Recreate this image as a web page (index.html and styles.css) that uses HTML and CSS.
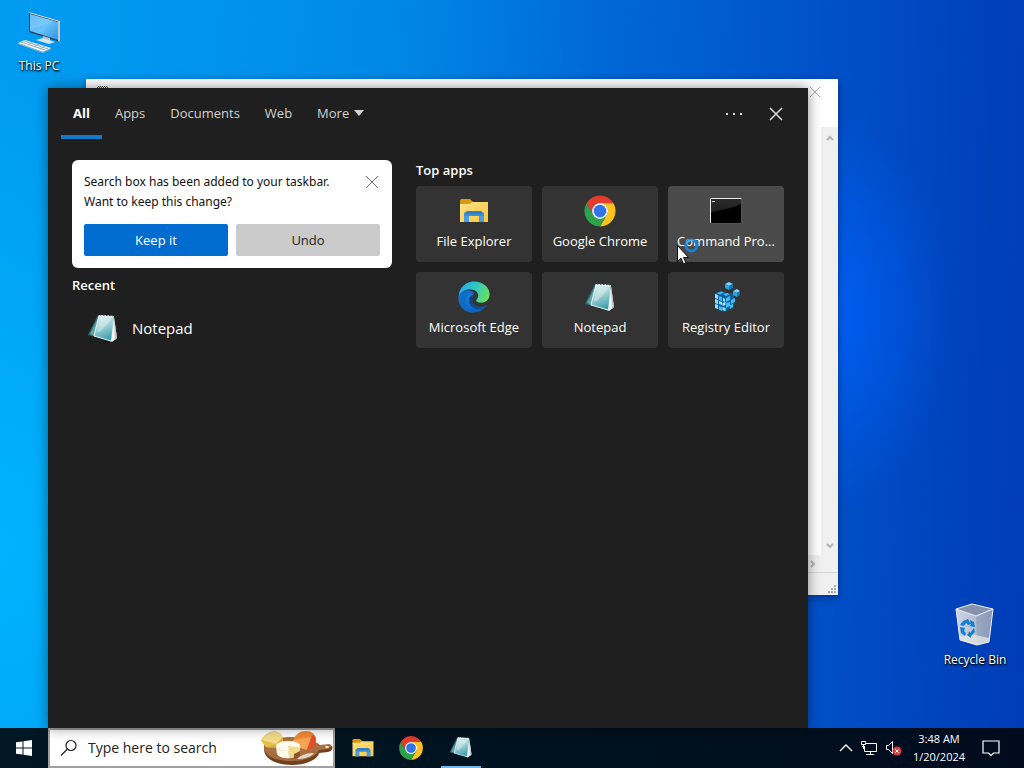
FILE: index.html
```html
<!DOCTYPE html>
<html lang="en">
<head>
<meta charset="utf-8">
<title>Desktop</title>
<link rel="stylesheet" href="styles.css">
</head>
<body>
<svg class="defs" aria-hidden="true">
  <defs>
    <linearGradient id="gFolder" x1="0" y1="0" x2="1" y2="1"><stop offset="0" stop-color="#ffe08a"/><stop offset="1" stop-color="#fbc93f"/></linearGradient>
    <linearGradient id="gPage" x1="0.2" y1="0" x2="0.5" y2="1"><stop offset="0" stop-color="#e2f3f4"/><stop offset="0.5" stop-color="#9dd0d4"/><stop offset="1" stop-color="#3a9fad"/></linearGradient>
    <linearGradient id="gEdgeTop" x1="0" y1="0.3" x2="1" y2="0.6"><stop offset="0" stop-color="#2aa9e6"/><stop offset="0.5" stop-color="#2fc9c0"/><stop offset="1" stop-color="#6be05c"/></linearGradient>
    <linearGradient id="gEdgeMid" x1="0" y1="0" x2="0.5" y2="1"><stop offset="0" stop-color="#2299e4"/><stop offset="1" stop-color="#0b64c0"/></linearGradient>
    <linearGradient id="gEdgeLow" x1="0" y1="0" x2="1" y2="0.6"><stop offset="0" stop-color="#0f3f7c"/><stop offset="1" stop-color="#0d55a0"/></linearGradient>
    <linearGradient id="gScreen" x1="0" y1="0" x2="1" y2="1"><stop offset="0" stop-color="#4fb2f3"/><stop offset="0.5" stop-color="#6ac3fb"/><stop offset="1" stop-color="#2b93e6"/></linearGradient>
    <linearGradient id="gBin" x1="0" y1="0" x2="1" y2="0"><stop offset="0" stop-color="#d8dde6"/><stop offset="0.55" stop-color="#bcc4d1"/><stop offset="1" stop-color="#929fb8"/></linearGradient>
    <linearGradient id="gTerm" x1="0" y1="0" x2="0" y2="1"><stop offset="0" stop-color="#2c2c2c"/><stop offset="1" stop-color="#151515"/></linearGradient>
  </defs>
  <symbol id="i-folder" viewBox="0 0 32 32">
    <path fill="#d99a0b" d="M2 5.500q0-1.500 1.500-1.500H12l3 3v4H2z"/>
    <path fill="url(#gFolder)" d="M2 9h10l2-2h16v20H2z"/>
    <path fill="#3c8fd4" d="M9 16h14l3 2v9h-5v-6H11v6H6v-9z"/>
    <path fill="#2b73b8" d="M9 16h14l1 3H8z" opacity=".6"/>
    <path fill="#55aae8" d="M6 21h5v6H6zM21 21h5v6h-5z" opacity=".55"/>
  </symbol>
  <symbol id="i-chrome" viewBox="0 0 48 48">
    <circle cx="24" cy="24" r="11.500" fill="#fff"/>
    <path fill="#e33b2e" d="M4.950 13A22 22 0 0 1 43.050 13H24A11 11 0 0 0 14.470 29.500z"/>
    <path fill="#fcc31e" d="M43.050 13A22 22 0 0 1 24 46L33.530 29.500A11 11 0 0 0 24 13z"/>
    <path fill="#2da14c" d="M24 46A22 22 0 0 1 4.950 13L14.470 29.500A11 11 0 0 0 33.530 29.500z"/>
    <circle cx="24" cy="24" r="9" fill="#2f74e8"/>
  </symbol>
  <symbol id="i-edge" viewBox="0 0 48 48">
    <path fill="url(#gEdgeMid)" d="M24 2C12 2 2 12 2 25c0 12 9 21 20 21 7 0 13-2 16-6-9 3-20-1-20-12 0-5 3-7 6-8C23 14 14 12 4 22z"/>
    <path fill="url(#gEdgeTop)" d="M3 20C5 9 14 2 24 2c12 0 22 8 22 18 0 8-6 12-12 12-5 0-7-2-7-3 0-1 3-3 3-7 0-5-5-9-12-9-7 0-12 3-15 7z"/>
    <path fill="url(#gEdgeLow)" d="M17 27c0 10 9 17 19 14 3-1 5-3 6-4 1-1 0-2-1-1-8 4-17 1-19-5-1-4 0-7 2-9-4 0-7 2-7 5z"/>
    <path fill="#0c67c5" d="M18 20c-5 3-7 9-5 15 2 7 8 11 14 11-10 1-19-4-23-13C1 24 5 15 14 14c6 0 10 3 10 7-2-1-4-1-6-1z" opacity=".75"/>
  </symbol>
  <symbol id="i-notepad" viewBox="0 0 32 32">
    <path fill="#f1f4f5" d="M27 5l3 21-5 4-4-2z"/>
    <path fill="#b9c3c6" d="M27 5l3 21-2 2z"/>
    <path fill="#2f7377" d="M11 3L1 23l8 2 6-18z"/>
    <path fill="#9ccfd0" d="M12 4L3 22l5 2 7-18z" opacity=".5"/>
    <path fill="url(#gPage)" d="M12 3l15 1-3 25L7 24z"/>
    <path fill="#fff" d="M14 6l11 1-12 13-3 0z" opacity=".3"/>
    <path fill="none" stroke="#e8f5f6" stroke-width="1" d="M12 3.500L7 24l17 5"/>
    <path stroke="#f3f8f8" stroke-width="2" stroke-dasharray="2 1" d="M12 4l15 1"/>
    <path stroke="#384b50" stroke-width="1" stroke-dasharray="1 2" d="M13 3l14 1"/>
  </symbol>
  <symbol id="i-cmd" viewBox="0 0 32 26">
    <path fill="url(#gTerm)" d="M0 0h32v26H0z"/>
    <path fill="#000" d="M1 15C7 11 17 13 31 6v19H1z"/>
    <path fill="none" stroke="#555" d="M.5 25.500h31V.5"/>
    <path fill="none" stroke="#eee" d="M.5 25V.5H31.500"/>
    <path stroke="#ddd" d="M2 3.500h3"/>
  </symbol>
  <symbol id="i-reg" viewBox="0 0 32 32">
    <path fill="#0c5f9a" d="M5 12l8-2 5 3 6-1v14l-9 5-10-4z"/>
    <path fill="#8fe0ff" d="M5 13l3 1v4l-3-1zM5 18l3 1v4l-3-1zM5 23l3 1v4l-3-1zM9 20l3 1v3l-3-1z"/>
    <path fill="#3dbcf5" d="M9 15l3 1v4l-3-1zM9 25l3 1v4l-3-1zM7 12l4-1.500 3 1-4 2zM16 17l4-2v4l-4 2zM21 19l4-2v4l-4 2zM16 22l4-1v4l-4 2zM20 24l3-1v3l-3 2zM13 13l4-1 3 1-4 2z"/>
    <path fill="#a6e7ff" d="M13 17l2 1v3l-2-1zM12.500 22l3-1v3l-3 1zM12.500 26l3 1v3l-3-1z"/>
    <path fill="#74d6fc" d="M15 3l4-2 4 2-4 2zM23 10l4-2 3 2-3 2z"/>
    <path fill="#2ba5e2" d="M15 3l4 2v4l-4-2zM23 10l4 2v4l-4-2z"/>
    <path fill="#0f76b4" d="M23 3l-4 2v4l4-2zM30 10l-3 2v4l3-2z"/>
  </symbol>
  <symbol id="i-close" viewBox="0 0 14 14"><path fill="none" stroke="currentColor" d="M1 1l12 12M13 1L1 13"/></symbol>
</svg>

<main class="desktop">
  <a class="shortcut shortcut-pc" href="#pc">
    <svg width="48" height="48" viewBox="0 0 48 48" aria-hidden="true">
      <path fill="#263b51" d="M14 3l31 9v21L14 23z"/>
      <path fill="#dceefb" d="M14 3l31 9v1L14 4z"/>
      <path fill="url(#gScreen)" d="M15 5l28 8v18L15 22z"/>
      <path fill="#a6dbff" opacity=".3" d="M15 5l24 7-24 9z"/>
      <path fill="#c7c8c7" d="M43 12l2 .5V33l-2-1z"/>
      <path fill="#aebfca" d="M28 27l7 2v4l-8-1z"/>
      <path fill="#d8e4eb" d="M21 31l7-2 12 4-6 2z"/>
      <path fill="#edf4f8" d="M3 34l7-3 26 8-8 4z"/>
      <path fill="#a3b5c2" d="M3 34l25 9v1L3 35zM28 43l8-4v1l-8 4z"/>
      <path stroke="#9bafbd" stroke-width="1" fill="none" d="M6 33l24 8M9 32l24 8M13 36l5-3M19 38l5-3M25 40l5-3"/>
    </svg>
    <span>This PC</span>
  </a>
  <a class="shortcut shortcut-bin" href="#bin">
    <svg width="48" height="48" viewBox="0 0 48 48" aria-hidden="true">
      <path fill="#8793aa" d="M5 7l16-5 21 5-17 7z"/>
      <path fill="url(#gBin)" d="M5 7l20 7 17-7-4 33-12 3-17-5z" opacity=".95"/>
      <path fill="#8796b3" opacity=".5" d="M25 14l17-7-4 33-12 3z"/>
      <path fill="#e5e5e1" opacity=".75" d="M9 35l11-3 18 4v4l-12 3-17-5z"/>
      <path fill="none" stroke="#eef1f6" stroke-width="1" d="M5 7l16-5 21 5-17 7zL9 38l17 5 12-3 4-33"/>
      <g fill="#147fd1"><path d="M12 19l5-2 3 5-3 1-2-2-2 3-4-1zM19 18l4 2 1 5-6-1 2-1zM9 25l5 1-1 3 2 2-1 3-4-3zM23 26l1 4-4 4v2l-4-3 3-4v2l1-1z"/></g>
    </svg>
    <span>Recycle Bin</span>
  </a>

  <section class="window" aria-label="Notepad window">
    <header class="window-title">
      <svg width="14" height="10" viewBox="0 0 14 10" aria-hidden="true"><path stroke="#333" stroke-dasharray="1 1" d="M2 .5h10M1 1.500h12"/><path fill="#8dc8ce" d="M1 5h12v5H1z"/></svg>
      <button type="button" aria-label="Close window"><svg width="12" height="12"><use href="#i-close"/></svg></button>
    </header>
    <div class="window-body">
      <div></div>
      <div class="scroll-v" aria-hidden="true">
        <svg width="8" height="6" viewBox="0 0 8 6"><path d="M1 5l3-3 3 3"/></svg>
        <svg width="8" height="6" viewBox="0 0 8 6"><path d="M1 1l3 3 3-3"/></svg>
      </div>
      <div class="scroll-h" aria-hidden="true"><svg width="6" height="8" viewBox="0 0 6 8"><path d="M1 1l3 3-3 3"/></svg></div>
    </div>
    <footer class="window-status"><svg width="10" height="10" viewBox="0 0 10 10" aria-hidden="true"><path fill="#aaa" d="M7 1h2v2H7zM4 4h2v2H4zM7 4h2v2H7zM1 7h2v2H1zM4 7h2v2H4zM7 7h2v2H7z"/></svg></footer>
  </section>

  <section class="search-panel" aria-label="Search">
    <header class="panel-head">
      <nav class="tabs" aria-label="Search categories">
        <button class="tab tab-active" type="button">All</button>
        <button class="tab" type="button">Apps</button>
        <button class="tab" type="button">Documents</button>
        <button class="tab" type="button">Web</button>
        <button class="tab" type="button">More<svg width="10" height="6" viewBox="0 0 10 6" aria-hidden="true"><path fill="currentColor" d="M0 0h10L5 6z"/></svg></button>
      </nav>
      <div class="panel-actions">
        <button type="button" aria-label="Options"><svg width="16" height="2" viewBox="0 0 16 2"><path fill="currentColor" d="M0 0h2v2H0zM7 0h2v2H7zM14 0h2v2h-2z"/></svg></button>
        <button type="button" aria-label="Close search"><svg width="14" height="14" stroke-width="1.500"><use href="#i-close"/></svg></button>
      </div>
    </header>
    <div class="panel-body">
      <div>
        <div class="notice">
          <div class="notice-top">
            <p>Search box has been added to your taskbar.<br>Want to keep this change?</p>
            <button class="notice-close" type="button" aria-label="Dismiss"><svg width="14" height="14"><use href="#i-close"/></svg></button>
          </div>
          <div class="notice-buttons">
            <button class="keep" type="button">Keep it</button>
            <button class="undo" type="button">Undo</button>
          </div>
        </div>
        <h2>Recent</h2>
        <a class="recent" href="#notepad"><svg width="32" height="32"><use href="#i-notepad"/></svg><span>Notepad</span></a>
      </div>
      <div>
        <h2>Top apps</h2>
        <div class="apps">
          <a class="app" href="#explorer"><svg width="32" height="32"><use href="#i-folder"/></svg><span>File Explorer</span></a>
          <a class="app" href="#chrome"><svg width="34" height="34"><use href="#i-chrome"/></svg><span>Google Chrome</span></a>
          <a class="app app-hover" href="#cmd"><svg width="32" height="26"><use href="#i-cmd"/></svg><span>Command Pro...</span></a>
          <a class="app" href="#edge"><svg width="34" height="34"><use href="#i-edge"/></svg><span>Microsoft Edge</span></a>
          <a class="app" href="#notepad"><svg width="32" height="32"><use href="#i-notepad"/></svg><span>Notepad</span></a>
          <a class="app" href="#registry"><svg width="32" height="32"><use href="#i-reg"/></svg><span>Registry Editor</span></a>
        </div>
      </div>
    </div>
  </section>

  <svg class="pointer" width="26" height="28" viewBox="0 0 26 28" aria-hidden="true">
    <circle cx="15.500" cy="8.500" r="5.500" fill="none" stroke="#1683d8" stroke-width="3"/>
    <path fill="none" stroke="#54b8f8" stroke-width="1.500" d="M10.500 6.500a5.500 5.500 0 0 1 7-3"/>
    <path fill="#fff" stroke="#111" stroke-width="1" d="M1.500 8.500v16l3.500-3.500 2.500 6 2.500-1-2.500-5.500h5z"/>
  </svg>
</main>

<footer class="taskbar">
  <button class="start" type="button" aria-label="Start"><svg width="16" height="16" viewBox="0 0 16 16"><path fill="#fff" d="M0 2.300L6.500 1.400V7.500H0zM7.500 1.200L16 0v7.500H7.500zM0 8.500h6.500v6.100L0 13.700zM7.500 8.500H16V16l-8.500-1.200z"/></svg></button>
  <label class="search-box">
    <svg width="18" height="18" viewBox="0 0 18 18" aria-hidden="true"><g fill="none" stroke="#222" stroke-width="1.200"><circle cx="11" cy="6.500" r="5"/><path d="M7.500 10L1 16.500"/></g></svg>
    <input type="text" placeholder="Type here to search" aria-label="Type here to search">
    <svg width="72" height="36" viewBox="0 0 72 36" aria-hidden="true">
      <path fill="#70401f" d="M3 19c0 10 12 16 28 16 15 0 26-6 27-12l9-1c5-1 6-6 2-7l-10 1C54 11 43 8 30 8 14 8 3 12 3 19z"/>
      <path fill="#a8703f" d="M3 17c0 9 12 14 28 14 14 0 25-5 27-11l9-1c4-1 4-5 1-5l-9 1C54 10 43 7 30 7 14 7 3 11 3 17z"/>
      <ellipse cx="66" cy="17" rx="2" ry="1" fill="#f5e9dc"/>
      <path fill="#8b572d" opacity=".5" d="M8 21c8 7 30 10 46 0-8 10-37 12-46 0z"/>
      <path fill="#e5bf50" d="M0 11q2-7 13-10 8 2 9 7v8q-8 3-17 1z"/><path fill="#f4dc8c" d="M1 10Q4 4 13 1q8 2 9 6l-7 7z"/><path fill="#d9aa37" opacity=".7" d="M15 14l7-7v9q-8 3-16 1z"/>
      <path fill="#f08a35" d="M33 9q3-8 12-8 9 0 10 9l-1 3-21 0z"/><path fill="#f6a552" d="M32 10L51 7l3 5-8 8-14-4z"/><path fill="#e2512c" d="M51 5q4 0 4 5l-1 6-9 6z"/>
      <path fill="#e8d8ae" d="M16 17v7c2 5 18 7 23-1v-7z"/><ellipse cx="27" cy="16" rx="12" ry="5" fill="#fffbee"/><path fill="#fffae9" d="M15 17c2 4 8 5 12 3l1 8q-10 0-12-4z"/><path fill="#f3db8b" d="M27 16l11 1-2 7-3-1-4 4z"/><path fill="#905628" d="M33 24l6-3v6l-6 2z"/>
      <path fill="#ded7cb" d="M36 29c5-5 11-6 17-6-3 4-10 6-17 6z"/>
    </svg>
  </label>
  <nav class="pinned" aria-label="Pinned apps">
    <button type="button" aria-label="File Explorer"><svg width="24" height="24"><use href="#i-folder"/></svg></button>
    <button type="button" aria-label="Google Chrome"><svg width="26" height="26"><use href="#i-chrome"/></svg></button>
    <button class="open" type="button" aria-label="Notepad"><svg width="24" height="24"><use href="#i-notepad"/></svg></button>
  </nav>
  <div class="tray">
    <button type="button" aria-label="Show hidden icons"><svg width="14" height="8" viewBox="0 0 14 8"><path fill="none" stroke="#fff" stroke-width="1.300" d="M1 7l6-6 6 6"/></svg></button>
    <button type="button" aria-label="Network"><svg width="18" height="16" viewBox="0 0 18 16"><path fill="none" stroke="#fff" d="M6 3.500h10.500v8H4.500V7M10.500 12v3M6 14.500h8M1.500 1.500h4v3h-4zM3.500 4v5M2 6.500h3"/></svg></button>
    <button type="button" aria-label="Volume muted"><svg width="18" height="16" viewBox="0 0 18 16"><path fill="none" stroke="#fff" d="M1.500 5.500h2l4-4v12l-4-4h-2z"/><circle cx="12" cy="11" r="4.500" fill="#d83b3b"/><path stroke="#fff" d="M10 9l4 4M14 9l-4 4"/></svg></button>
    <time class="clock" datetime="2024-01-20T03:48"><span>3:48 AM</span><span>1/20/2024</span></time>
    <button type="button" aria-label="Notifications"><svg width="18" height="18" viewBox="0 0 18 18"><path fill="none" stroke="#fff" stroke-width="1.200" d="M1 2h16v12h-5.500L9 16.500 6.500 14H1z"/></svg></button>
  </div>
</footer>
</body>
</html>
```
FILE: styles.css
```css
* { box-sizing: border-box; }

body {
  margin: 0;
  height: 100vh;
  display: flex;
  flex-direction: column;
  overflow: hidden;
  font-family: "Open Sans", "Noto Sans", sans-serif;
  font-size: 13px;
  line-height: 20px;
  color: #fff;
  background: #0050cc;
}

button {
  border: 0;
  padding: 0;
  background: none;
  color: inherit;
  font: inherit;
}

a { color: inherit; text-decoration: none; }
p, h2 { margin: 0; }
svg { display: block; flex: none; }
.defs { position: absolute; width: 0; height: 0; }

.desktop {
  position: relative;
  flex: 1;
  min-height: 0;
  background:
    radial-gradient(ellipse 120px 200px at 81% 43%, rgba(0, 98, 255, 0.8), rgba(0, 80, 220, 0)),
    radial-gradient(ellipse 300px 480px at 0% 75%, rgba(0, 182, 255, 0.9), rgba(0, 170, 255, 0)),
    linear-gradient(92deg, #009cf2 0%, #0094ee 20%, #0088e6 38%, #0068d6 58%, #0050c8 80%, #003cb6 100%);
}

.shortcut {
  position: absolute;
  width: 76px;
  display: flex;
  flex-direction: column;
  align-items: center;
  font-size: 12px;
  line-height: 16px;
  text-shadow: 1px 1px 2px #000, 0 1px 2px #000;
}
.shortcut-pc { left: 1px; top: 9px; }
.shortcut-pc svg { margin-bottom: 1px; }
.shortcut-bin { right: 11px; top: 602px; }
.shortcut-bin svg { margin-bottom: 2px; }

.window {
  position: absolute;
  left: 86px;
  top: 79px;
  width: 752px;
  height: 516px;
  display: flex;
  flex-direction: column;
  background: #fff;
  color: #999;
  box-shadow: 0 2px 8px rgba(0, 0, 40, 0.4);
}
.window-title {
  height: 48px;
  display: flex;
  align-items: flex-start;
  justify-content: space-between;
  padding: 7px 17px 0 10px;
}
.window-body {
  flex: 1;
  display: grid;
  grid-template-columns: 1fr 17px;
  grid-template-rows: 1fr 17px;
}
.scroll-v {
  display: flex;
  flex-direction: column;
  justify-content: space-between;
  align-items: center;
  padding: 8px 0 6px;
  background: #f0f0f0;
}
.scroll-h {
  grid-column: 1 / 3;
  display: flex;
  align-items: center;
  justify-content: flex-end;
  padding-right: 22px;
  background: #f0f0f0;
}
.scroll-v path, .scroll-h path { fill: none; stroke: #b4b4b4; stroke-width: 2; }
.window-status {
  height: 23px;
  display: flex;
  justify-content: flex-end;
  align-items: flex-end;
  padding: 1px;
  border-top: 1px solid #d8d8d8;
  background: #f0f0f0;
}

.search-panel {
  position: absolute;
  left: 48px;
  top: 88px;
  bottom: 0;
  width: 760px;
  background: #1f1f1f;
  box-shadow: 0 0 12px rgba(0, 0, 0, 0.45);
}
.panel-head {
  display: flex;
  justify-content: space-between;
  padding: 0 25px 0 13px;
}
.tabs { display: flex; gap: 1px; }
.tab {
  height: 51px;
  display: flex;
  align-items: center;
  gap: 5px;
  padding: 3px 12px 0;
  border-bottom: 4px solid transparent;
  color: #d2d2d2;
}
.tab-active {
  border-color: #1479c9;
  color: #fff;
  font-weight: 700;
}
.panel-actions { display: flex; gap: 27px; align-items: center; color: #ddd; }
.panel-actions button { display: flex; align-items: center; justify-content: center; }

.panel-body {
  display: grid;
  grid-template-columns: 320fr 368fr;
  gap: 24px;
  padding: 21px 24px 0;
}
h2 { font-size: 13px; line-height: 20px; font-weight: 600; }
.notice {
  padding: 12px;
  border-radius: 6px;
  background: #fff;
  color: #111;
  margin-bottom: 7px;
}
.notice-top { display: flex; justify-content: space-between; align-items: flex-start; }
.notice-top p {
  font-family: "Noto Sans", "Open Sans", sans-serif;
  font-size: 12px;
  white-space: nowrap;
}
.notice-close { padding: 3px 1px; color: #666; }
.notice-buttons {
  display: grid;
  grid-template-columns: 1fr 1fr;
  gap: 8px;
  margin-top: 12px;
}
.notice-buttons button { height: 32px; border-radius: 2px; }
.keep { background: #006cd0; color: #fff; }
.undo { background: #cbcbcb; color: #222; }
.recent {
  display: flex;
  align-items: center;
  gap: 13px;
  padding: 17px 15px;
  font-size: 15px;
}

.apps {
  display: grid;
  grid-template-columns: repeat(3, 1fr);
  gap: 10px;
  margin-top: 6px;
}
.app {
  min-width: 0;
  height: 76px;
  display: grid;
  grid-template-rows: 38px 22px;
  align-items: center;
  justify-items: center;
  padding-top: 6px;
  border-radius: 4px;
  background: #333;
  white-space: nowrap;
}
.app-hover { background: #4a4a4a; }

.pointer { position: absolute; left: 676px; top: 237px; }

.taskbar {
  height: 40px;
  display: flex;
  align-items: stretch;
  background: linear-gradient(90deg, #001824, #00121f 50%, #000c1e);
}
.start { width: 48px; display: flex; align-items: center; justify-content: center; }
.search-box {
  width: 287px;
  display: flex;
  align-items: center;
  padding: 0 0 0 10px;
  border: 2px solid #a0a0a0;
  background: #fff;
}
.search-box input {
  flex: 1;
  min-width: 0;
  border: 0;
  padding: 0 0 0 10px;
  outline: 0;
  background: none;
  font: inherit;
  font-size: 14px;
}
.search-box input::placeholder { color: #222; opacity: 1; }
.pinned { display: flex; padding-left: 4px; }
.pinned button {
  width: 48px;
  display: flex;
  align-items: center;
  justify-content: center;
}
.pinned .open {
  width: 40px;
  margin-left: 6px;
  border-bottom: 2px solid #76b9ed;
}
.tray {
  margin-left: auto;
  display: flex;
  align-items: center;
  gap: 7px;
  padding-right: 24px;
}
.clock {
  display: flex;
  flex-direction: column;
  align-items: center;
  width: 58px;
  margin-right: 7px;
  font-size: 11px;
  line-height: 18px;
}
```
